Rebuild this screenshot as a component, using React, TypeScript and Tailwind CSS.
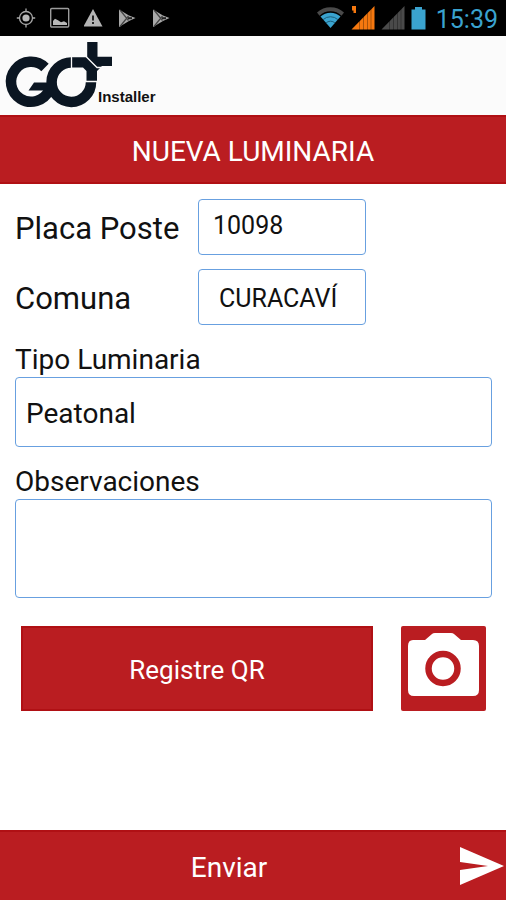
import React, { useState } from 'react';

const LocationIcon = () => (
  <svg width="20" height="22" viewBox="0 0 20 22" fill="none" stroke="#a8a8a8" strokeWidth="1.3">
    <circle cx="10" cy="11" r="6.5" />
    <circle cx="10" cy="11" r="3.6" fill="#b8b8b8" stroke="none" />
    <path d="M10 1.5v3M10 17.5v3M.8 11h3M16.2 11h3" />
  </svg>
);

const ImageIcon = () => (
  <svg width="20" height="22" viewBox="0 0 20 22">
    <rect x="0.7" y="1.5" width="18" height="18.5" rx="1" fill="none" stroke="#9c9c9c" strokeWidth="1.4" />
    <path d="M3 18v-4l2-2.2 3 1.5 3 2 3-1 3 1.8V18z" fill="#b8b8b8" />
  </svg>
);

const WarningIcon = () => (
  <svg width="20" height="22" viewBox="0 0 20 22">
    <path d="M9 2 18.5 19.5H-.5z" fill="#b4b4b4" />
    <path d="M9 8.5v5M9 15v2" stroke="#222" strokeWidth="2" />
  </svg>
);

const PlayIcon = () => (
  <svg width="20" height="22" viewBox="0 0 20 22">
    <path d="M1 2.5 11 8.5 17.5 11 11 14 1 20z" fill="#a8a8a8" />
    <path d="M2 3 10.5 13.5M2 19.5 10.5 9" stroke="#444" strokeWidth="1.2" />
    <path d="M10 11.2h4" stroke="#222" strokeWidth="2" />
  </svg>
);

const WifiIcon = () => (
  <svg width="28" height="24" viewBox="0 0 28 24">
    <path d="M0 6.5a20 20 0 0 1 27 0l-2.5 3.2a16 16 0 0 0-22 0z" fill="#4a4a4a" />
    <path d="M3.5 10.5a15 15 0 0 1 20 0L13.500 22z" fill="#3aa3cf" />
    <path d="M6 13.7a11 11 0 0 1 15 0M9 17a6.5 6.5 0 0 1 9 0" fill="none" stroke="#1b5f7c" strokeWidth="1" />
  </svg>
);

interface SignalProps {
  color: string;
  roaming?: boolean;
}

const SignalIcon: React.FC<SignalProps> = ({ color, roaming }) => (
  <svg width="24" height="24" viewBox="0 0 24 24">
    <path d="M.5 23.5 23.5 0v23.5z" fill={color} />
    <path d="M8.5 12v12M12.5 9v15M16.5 5v19M20 2v22" stroke="#000" strokeOpacity=".3" strokeWidth="1" />
    {roaming && <path d="M1 0h4v7H2.500V4.500H1z" fill={color} />}
  </svg>
);

const BatteryIcon = () => (
  <svg width="15" height="24" viewBox="0 0 15 24">
    <path d="M4 1h7v2.5h3.5v20H.5v-20H4z" fill="#3aa3cf" />
  </svg>
);

const Logo = () => (
  <svg width="114" height="79" viewBox="0 0 114 79" fill="none" stroke="#0b1622" strokeWidth="10.5" role="img" aria-label="GO+">
    <path d="M45 31.5A20 20 0 1 0 49 54.5" />
    <path d="M34 46.500H49V54.5H28.5z" fill="#0b1622" stroke="none" />
    <path d="M72 26.5A19.700 19.700 0 1 0 91 46" />
    <path d="M71 21.3H87.2V6H97.5V20.7H112V30H102L97 35V46H86.500V35L83 31.500H71z" fill="#0b1622" stroke="none" />
    <path d="M71.500 20V33M85 45.500H98M86 20.500 97 31.500H103" stroke="#fbfbfb" strokeWidth="1.300" />
  </svg>
);

const CameraIcon = () => (
  <svg width="85" height="85" viewBox="0 0 85 85">
    <path
      d="M12 14H24L31 8Q32 7 34 7H50Q52 7 53 8L60 14H72Q78 14 78 20V64Q78 70 72 70H13Q7 70 7 64V20Q7 14 12 14z"
      fill="#fff"
    />
    <circle cx="42" cy="42.5" r="14.5" fill="none" stroke="#ba1d21" strokeWidth="6.5" />
  </svg>
);

const SendIcon = () => (
  <svg width="48" height="44" viewBox="0 0 48 44">
    <path d="M2 1 46 20 2 39V24L30 20 2 16z" fill="#fff" />
  </svg>
);

const StatusBar = () => (
  <div className="flex h-9 items-center justify-between bg-black pl-4 pr-2">
    <div className="flex items-center gap-[14px]">
      <LocationIcon />
      <ImageIcon />
      <WarningIcon />
      <PlayIcon />
      <PlayIcon />
    </div>
    <div className="flex items-center gap-[6px]">
      <WifiIcon />
      <SignalIcon color="#f5780f" roaming />
      <SignalIcon color="#4a4a4a" />
      <BatteryIcon />
      <span className="pl-1 pt-1 text-[25px] leading-8 text-[#3aa3cf]">15:39</span>
    </div>
  </div>
);

const App: React.FC = () => {
  const [placa, setPlaca] = useState('10098');
  const [comuna, setComuna] = useState('CURACAVÍ');
  const [tipo, setTipo] = useState('Peatonal');
  const [observaciones, setObservaciones] = useState('');

  return (
    <div className="flex min-h-screen flex-col bg-white font-['Roboto',sans-serif] text-[#111]">
      <StatusBar />

      <header className="flex h-[79px] items-end bg-[#fbfbfb]">
        <Logo />
        <span className="-ml-4 pb-2 font-['Liberation_Sans',sans-serif] text-[15px] leading-5 font-bold">Installer</span>
      </header>

      <h1 className="flex h-[69px] items-center justify-center border-y-2 border-[#b01014] bg-[#ba1d21] pt-1 text-[28px] leading-9 text-white">
        NUEVA LUMINARIA
      </h1>

      <form className="flex flex-1 flex-col" onSubmit={(e) => e.preventDefault()}>
        <div className="flex flex-col pt-[15px] pr-[14px] pl-[15px]">
          <div className="grid grid-cols-[183px_168px] items-center gap-y-[14px]">
            <label htmlFor="placa" className="pt-1 text-[31px] leading-9">Placa Poste</label>
            <input
              id="placa"
              value={placa}
              onChange={(e) => setPlaca(e.target.value)}
              className="h-14 w-full rounded border border-[#68a0e0] px-[14px] pb-1 text-[25px]"
            />
            <label htmlFor="comuna" className="pt-1 text-[31px] leading-9">Comuna</label>
            <select
              id="comuna"
              value={comuna}
              onChange={(e) => setComuna(e.target.value)}
              className="h-14 w-full appearance-none rounded border border-[#68a0e0] bg-white px-5 pt-1 text-[25px]"
            >
              <option>CURACAVÍ</option>
            </select>
          </div>

          <label htmlFor="tipo" className="mt-[18px] text-[28px] leading-[34px]">Tipo Luminaria</label>
          <select
            id="tipo"
            value={tipo}
            onChange={(e) => setTipo(e.target.value)}
            className="h-[70px] w-full appearance-none rounded border border-[#68a0e0] bg-white px-[10px] pt-1 text-[28px]"
          >
            <option>Peatonal</option>
          </select>

          <label htmlFor="observaciones" className="mt-[18px] text-[28px] leading-[34px]">Observaciones</label>
          <textarea
            id="observaciones"
            value={observaciones}
            onChange={(e) => setObservaciones(e.target.value)}
            className="h-[99px] w-full resize-none rounded border border-[#68a0e0] px-[10px] text-[28px]"
          />
        </div>

        <div className="flex gap-7 pt-7 pr-5 pl-[21px]">
          <button type="button" className="h-[85px] flex-1 border-2 border-[#b01014] bg-[#ba1d21] pt-1 text-[26px] text-white">
            Registre QR
          </button>
          <button type="button" aria-label="Tomar foto" className="rounded-xs bg-[#ba1d21]">
            <CameraIcon />
          </button>
        </div>

        <button type="submit" className="mt-auto flex h-[70px] w-full items-center border-t-2 border-[#b01014] bg-[#ba1d21] pt-1 text-[28px] text-white">
          <span className="flex-1">Enviar</span>
          <SendIcon />
        </button>
      </form>
    </div>
  );
};

export default App;
